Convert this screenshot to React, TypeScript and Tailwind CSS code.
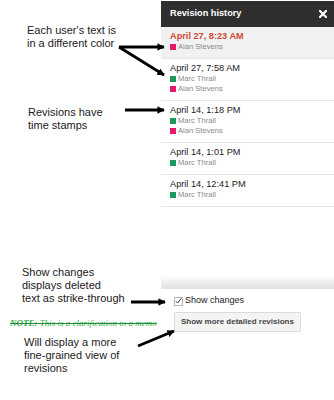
import React from "react";

type Author = "alan" | "marc";

type Revision = {
  time: string;
  authors: Author[];
  selected?: boolean;
};

const AUTHORS: Record<Author, { name: string; swatch: string }> = {
  alan: { name: "Alan Stevens", swatch: "bg-[#e6186a]" },
  marc: { name: "Marc Thrall", swatch: "bg-[#1b9a5c]" },
};

const REVISIONS: Revision[] = [
  { time: "April 27, 8:23 AM", authors: ["alan"], selected: true },
  { time: "April 27, 7:58 AM", authors: ["marc", "alan"] },
  { time: "April 14, 1:18 PM", authors: ["marc", "alan"] },
  { time: "April 14, 1:01 PM", authors: ["marc"] },
  { time: "April 14, 12:41 PM", authors: ["marc"] },
];

function Arrows() {
  return (
    <svg className="absolute inset-0 pointer-events-none" width="334" height="400" viewBox="0 0 334 400">
      <defs>
        <marker id="head" viewBox="0 0 10 10" refX="9" refY="5" markerWidth="2.6" markerHeight="2.6" orient="auto">
          <path d="M0 0L10 5L0 10z" fill="#000" />
        </marker>
      </defs>
      <g stroke="#000" strokeWidth="2.8" fill="none" markerEnd="url(#head)">
        <line x1="119" y1="47" x2="164" y2="47" />
        <line x1="119" y1="47" x2="164" y2="75" />
        <line x1="125" y1="110" x2="164" y2="110" />
        <line x1="131" y1="302" x2="165" y2="302" />
        <line x1="138" y1="346" x2="174" y2="331" />
      </g>
    </svg>
  );
}

function CloseIcon() {
  return (
    <svg width="8" height="8" viewBox="0 0 8 8">
      <path d="M1 1L7 7M7 1L1 7" stroke="#fff" strokeWidth="2.2" strokeLinecap="square" />
    </svg>
  );
}

export default function App() {
  return (
    <div className="relative w-[334px] h-[400px] bg-white overflow-hidden font-['Liberation_Sans',Arial,sans-serif] flex">
      {/* annotations */}
      <div className="w-[161px] flex-shrink-0 flex flex-col text-[11px] leading-[13px] text-[#1a1a1a]">
        <p className="mt-[24px] pl-[27px]">
          Each user's text is
          <br />
          in a different color
        </p>
        <p className="mt-[56px] pl-[28px]">
          Revisions have
          <br />
          time stamps
        </p>
        <p className="mt-[134px] pl-[22px]">
          Show changes
          <br />
          displays deleted
          <br />
          text as strike-through
        </p>
        <p className="mt-[13px] pl-[10px] text-[9px] leading-[10px] italic line-through decoration-[#1f8a3a] text-[#2fb04a] font-['Liberation_Serif',serif] whitespace-nowrap">
          <span className="font-bold">NOTE:</span> This is a clarification to a memo
        </p>
        <p className="mt-[8px] pl-[24px]">
          Will display a more
          <br />
          fine-grained view of
          <br />
          revisions
        </p>
      </div>

      {/* revision panel */}
      <div className="flex-1 flex flex-col pt-px">
        <div className="h-[26px] bg-[#2f2f2f] flex items-center justify-between pl-[9px] pr-[7px]">
          <span className="text-white font-bold text-[9.2px]">Revision history</span>
          <CloseIcon />
        </div>

        <div className="flex flex-col">
          {REVISIONS.map((r) => (
            <div
              key={r.time}
              className={`pl-[9px] pt-[3px] pb-[6px] border-b border-[#e6e6e6] ${r.selected ? "bg-[#f1f1f1]" : "bg-white"}`}
            >
              <div
                className={`text-[9.2px] leading-[12px] ${r.selected ? "text-[#d14836] font-bold" : "text-[#222]"}`}
              >
                {r.time}
              </div>
              {r.authors.map((a) => (
                <div key={a} className="flex items-center gap-[2px] h-[10px] text-[7.6px] text-[#8a8a8a]">
                  <span className={`w-[6px] h-[6px] ${AUTHORS[a].swatch}`} />
                  <span>{AUTHORS[a].name}</span>
                </div>
              ))}
            </div>
          ))}
        </div>

        <div className="mt-[68px] h-[14px] bg-gradient-to-b from-white to-[#e0e0e0]" />

        <div className="pl-[13px] flex flex-col">
          <label className="mt-[6px] h-[12px] flex items-center gap-[2px] text-[9px] text-[#222]">
            <span className="w-[9px] h-[9px] border border-[#b5b5b5] bg-white flex items-center justify-center">
              <svg width="8" height="8" viewBox="0 0 8 8">
                <path d="M1 4.2L3 6.3L7.2 1" stroke="#333" strokeWidth="1.1" fill="none" />
              </svg>
            </span>
            Show changes
          </label>
          <button className="mt-[5px] self-start h-[20px] px-[6px] rounded-[2px] border border-[#dadada] bg-[#f4f4f4] text-[8px] font-bold text-[#444]">
            Show more detailed revisions
          </button>
        </div>
      </div>

      <Arrows />
    </div>
  );
}
